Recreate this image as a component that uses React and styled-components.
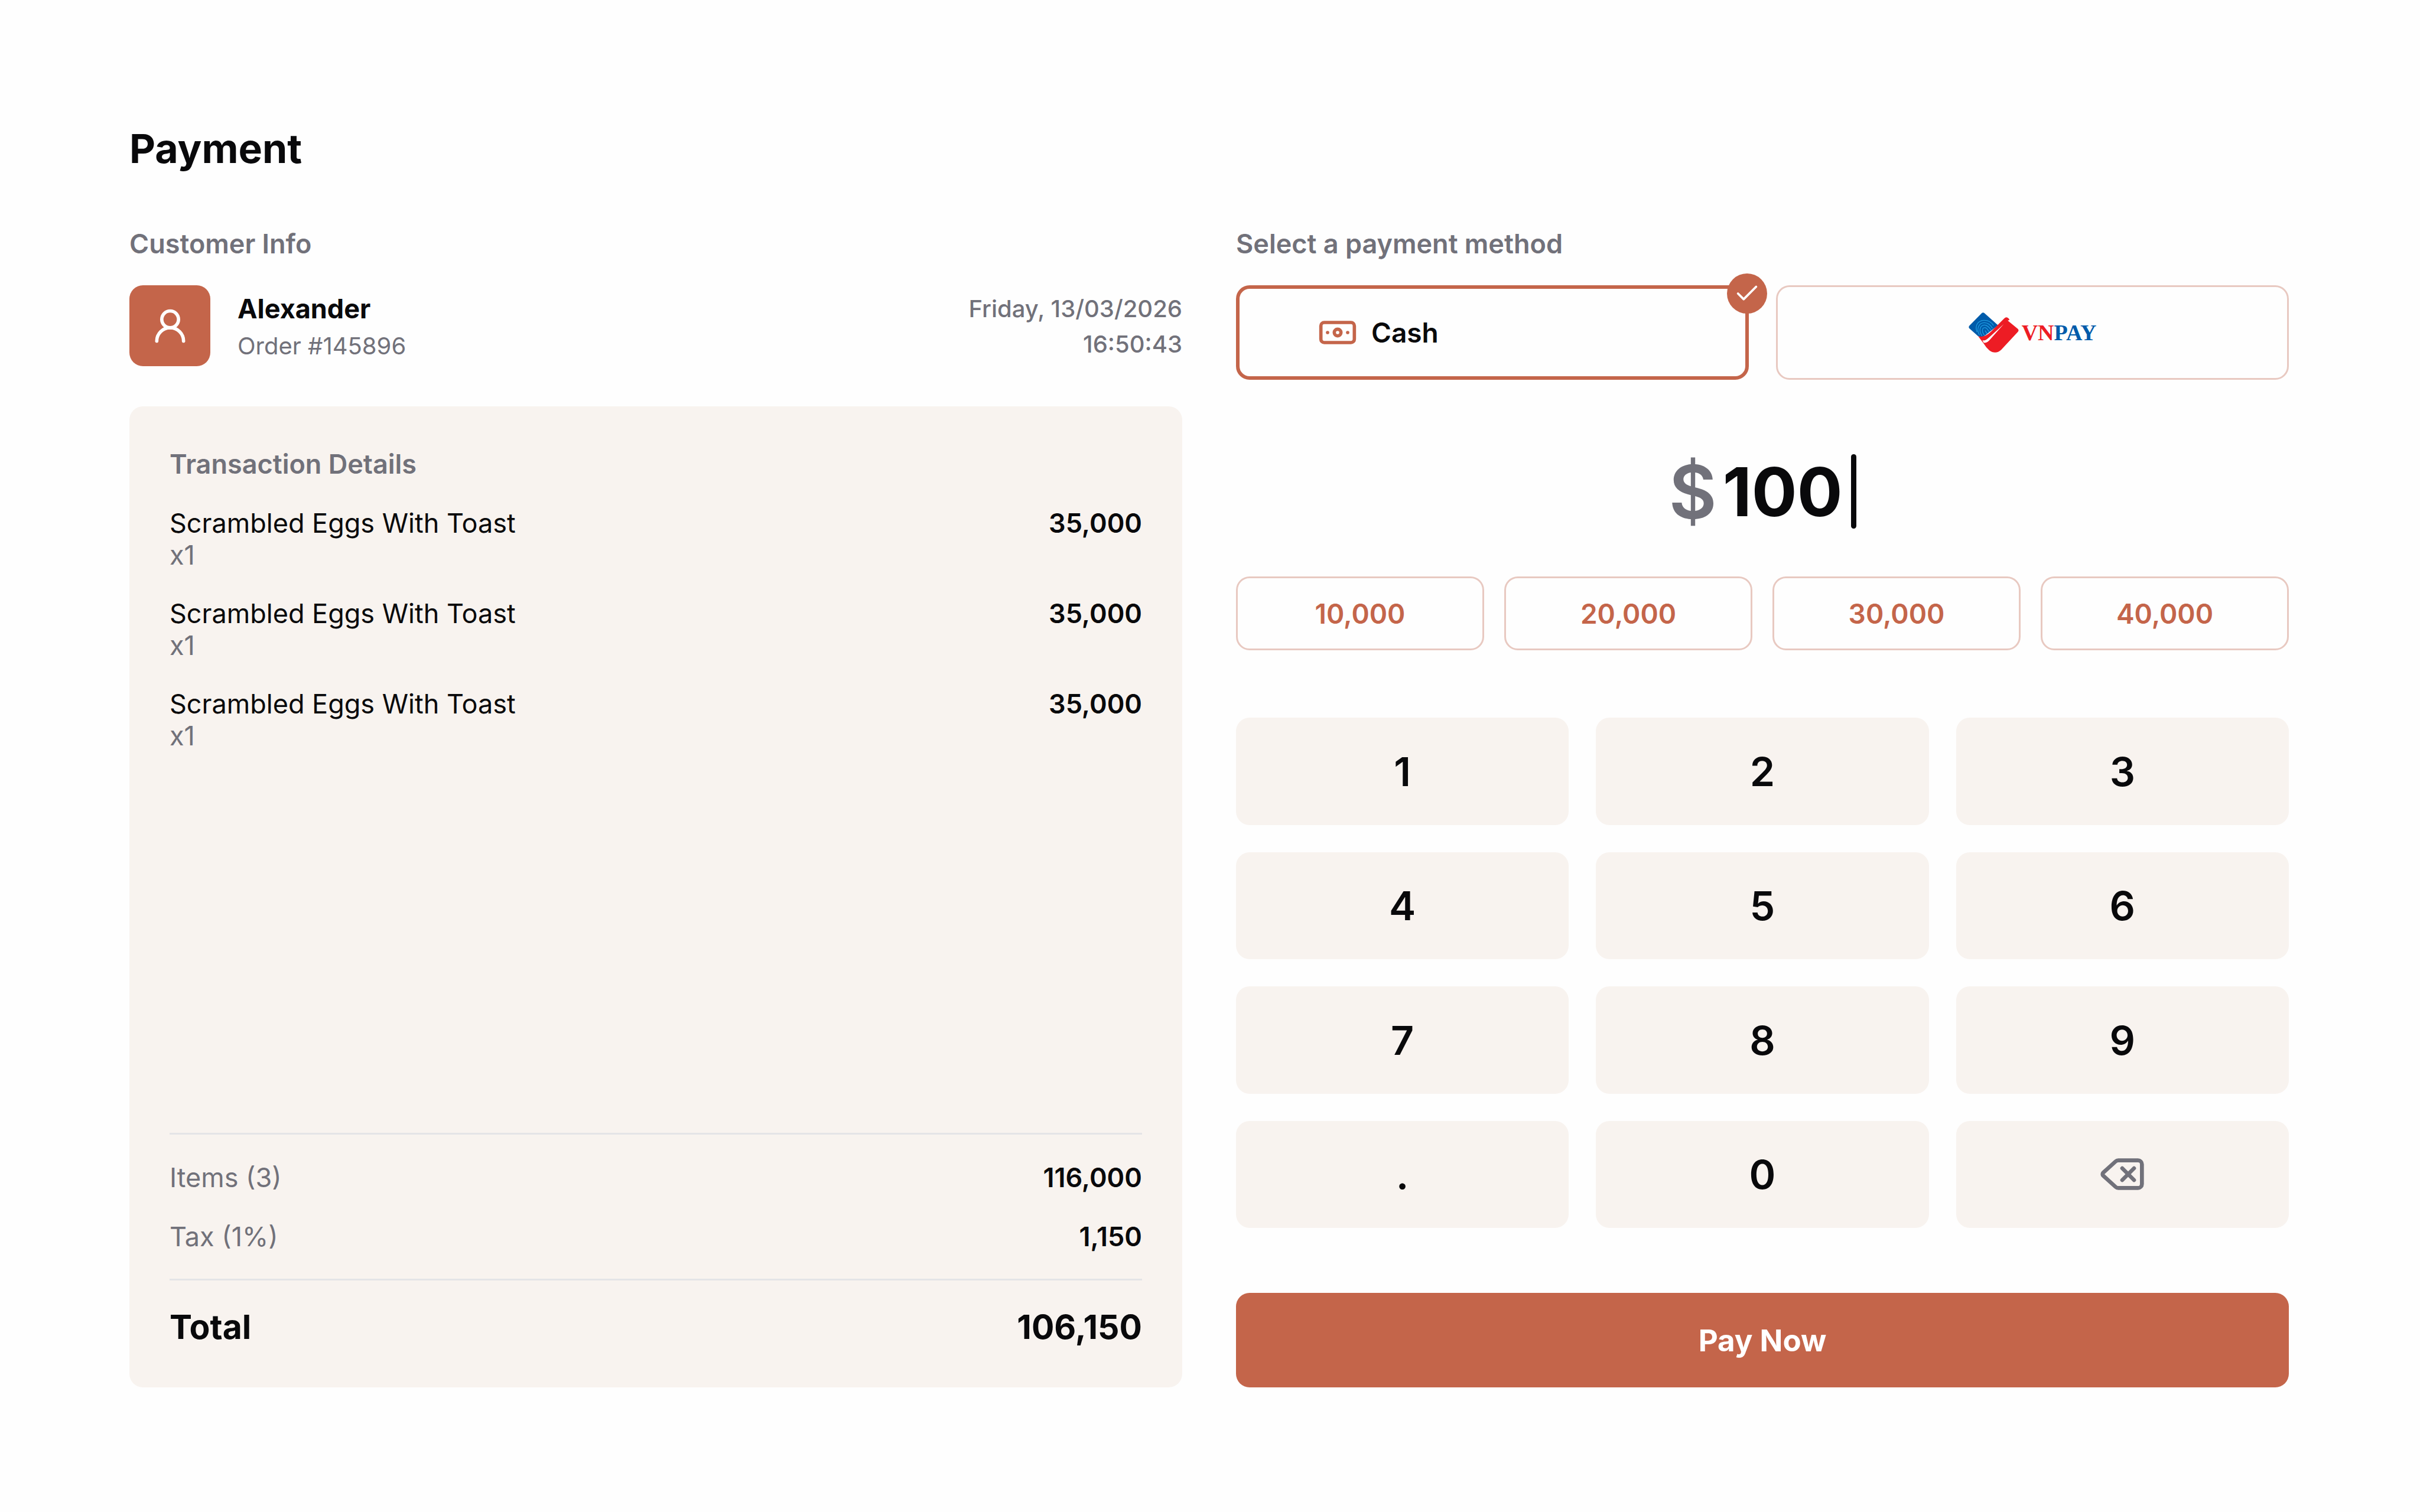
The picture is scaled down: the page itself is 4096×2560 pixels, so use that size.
import { useState } from "react";
import styled, { createGlobalStyle } from "styled-components";
import { Banknote, Check, Delete, UserRound } from "lucide-react";

const GlobalStyle = createGlobalStyle`
  * {
    box-sizing: border-box;
  }

  body {
    margin: 0;
    background: #fefefe;
    color: #09090b;
    font-family: Inter, "Liberation Sans", sans-serif;
  }

  button, input {
    font-family: inherit;
    color: inherit;
  }

  button {
    cursor: pointer;
  }
`;

const Page = styled.main`
  display: flex;
  flex-direction: column;
  min-height: 100vh;
  padding: 210px 222px 211px 219px;
`;

const Title = styled.h1`
  margin: 0 0 94px;
  font-size: 68px;
  line-height: 82px;
  font-weight: 700;
`;

const Columns = styled.div`
  flex: 1;
  display: grid;
  grid-template-columns: 1fr 1fr;
  gap: 91px;
`;

const Column = styled.section`
  display: flex;
  flex-direction: column;
  min-width: 0;
`;

const Heading = styled.h2`
  margin: 0 0 43px;
  color: #71717a;
  font-size: 45px;
  line-height: ${(props) => (props.$inCard ? 60 : 54)}px;
  font-weight: 600;
`;

const Customer = styled.div`
  display: flex;
  align-items: center;
  gap: 46px;
  margin-bottom: 68px;
`;

const Avatar = styled.div`
  display: flex;
  align-items: center;
  justify-content: center;
  width: 137px;
  height: 137px;
  border-radius: 23px;
  background: #c4654a;
  color: #fff;
`;

const Name = styled.div`
  font-size: 45px;
  line-height: 68px;
  font-weight: 700;
`;

const Muted = styled.div`
  color: #71717a;
  font-size: 40px;
  line-height: 57px;
`;

const DateTime = styled.div`
  margin-left: auto;
  padding-top: 3px;
  color: #71717a;
  font-size: 40px;
  line-height: 60px;
  font-weight: 500;
  text-align: right;
`;

const Card = styled.div`
  flex: 1;
  display: flex;
  flex-direction: column;
  padding: 68px;
  border-radius: 23px;
  background: #f8f3ef;
`;

const Items = styled.ul`
  flex: 1;
  display: flex;
  flex-direction: column;
  gap: 45px;
  margin: 0;
  padding: 0;
  list-style: none;
`;

const Row = styled.li`
  display: flex;
  justify-content: space-between;
  font-size: 45px;
  line-height: 54px;
`;

const Quantity = styled.div`
  color: #71717a;
`;

const Price = styled.span`
  font-weight: 600;
`;

const Summary = styled.dl`
  display: flex;
  flex-direction: column;
  gap: 46px;
  margin: 0;
  padding: 46px 0 44px;
  border-top: 3px solid #e4e4e7;
  border-bottom: 3px solid #e4e4e7;
`;

const SummaryRow = styled.div`
  display: flex;
  justify-content: space-between;
  font-size: 45px;
  line-height: 54px;

  dt {
    color: #71717a;
  }

  dd {
    margin: 0;
    font-weight: 600;
  }
`;

const Total = styled.div`
  display: flex;
  justify-content: space-between;
  margin-top: 45px;
  font-size: 57px;
  line-height: 68px;
  font-weight: 700;
`;

const Methods = styled.div`
  display: grid;
  grid-template-columns: 1fr 1fr;
  gap: 46px;
`;

const Method = styled.button`
  position: relative;
  display: flex;
  align-items: center;
  justify-content: ${(props) => (props.$center ? "center" : "flex-start")};
  gap: 23px;
  height: 160px;
  padding: 0 ${(props) => (props.$center ? 0 : 132)}px;
  border: ${(props) => (props.$active ? "6px solid #c4654a" : "3px solid #e8c9c1")};
  border-radius: 23px;
  background: transparent;
  font-size: 46px;
  font-weight: 600;
`;

const Badge = styled.span`
  position: absolute;
  top: -26px;
  right: -37px;
  display: flex;
  align-items: center;
  justify-content: center;
  width: 68px;
  height: 68px;
  border-radius: 50%;
  background: #c4654a;
  color: #fff;
`;

const Logo = styled.span`
  display: flex;
  align-items: center;
  gap: 5px;
  color: #ed1c24;
  font-family: "Liberation Serif", serif;
  font-size: 38px;
  font-weight: 700;

  b {
    color: #005baa;
  }
`;

const Amount = styled.div`
  display: flex;
  align-items: center;
  justify-content: center;
  height: 126px;
  margin: 126px 0 81px;
  font-size: 114px;
  font-weight: 700;
`;

const Currency = styled.label`
  margin-right: 10px;
  color: #71717a;
  font-size: 125px;
  font-weight: 600;
`;

const AmountInput = styled.input`
  field-sizing: content;
  padding: 0;
  border: none;
  outline: none;
  background: transparent;
  caret-color: transparent;
  font-size: 114px;
  font-weight: 700;
`;

const Caret = styled.span`
  width: 9px;
  height: 126px;
  margin-left: 14px;
  border-radius: 5px;
  background: #09090b;
`;

const Presets = styled.div`
  display: grid;
  grid-template-columns: repeat(4, 1fr);
  gap: 34px;
`;

const Preset = styled.button`
  height: 125px;
  border: 3px solid #e8c9c1;
  border-radius: 23px;
  background: transparent;
  color: #c4654a;
  font-size: 46px;
  font-weight: 600;
`;

const Keypad = styled.div`
  flex: 1;
  display: grid;
  grid-template-columns: repeat(3, 1fr);
  grid-auto-rows: 1fr;
  gap: 46px;
  margin: 114px 0 110px;
`;

const Key = styled.button`
  display: flex;
  align-items: center;
  justify-content: center;
  border: none;
  border-radius: 23px;
  background: #f8f3ef;
  font-size: 68px;
  font-weight: 600;

  svg {
    color: #71717a;
  }
`;

const PayButton = styled.button`
  height: 160px;
  border: none;
  border-radius: 23px;
  background: #c4654a;
  color: #fff;
  font-size: 51px;
  font-weight: 700;
`;

const VnpayMark = () => (
  <svg width="85" height="68" viewBox="0 0 254 204" fill="none" aria-hidden="true">
    <path
      d="M66 4q7-7 14 0l69 61-69 54q-14 8-32 2L4 82q-7-7 0-15z"
      fill="#005baa"
    />
    <g stroke="#1f9be0" strokeWidth="4" strokeLinecap="round">
      <path d="M42 98c-12-30 4-56 34-58 22-1 40 10 49 25" />
      <path d="M54 114c-16-30-4-60 24-62 18-1 34 12 42 28" />
      <path d="M67 118c-18-26-10-52 12-54 16-1 26 14 36 26" />
      <path d="M80 116c-16-20-12-38 2-39 10 0 14 12 22 20" />
      <path d="M92 107l-8-14" />
    </g>
    <path
      d="M48 121c22 6 42-2 66-24l66-66q9-10 18-4 7 4 9 11l-9 3 52 43q6 7 0 14l-85 92q-29 26-61 2-15-13-30-37z"
      fill="#ed1c24"
    />
    <path
      d="M178 59l-76 69c-12 11-20 16-32 14l6 12c14 2 24-6 34-18z"
      fill="#fff"
    />
  </svg>
);

const items = [
  { id: 1, name: "Scrambled Eggs With Toast", quantity: 1, price: "35,000" },
  { id: 2, name: "Scrambled Eggs With Toast", quantity: 1, price: "35,000" },
  { id: 3, name: "Scrambled Eggs With Toast", quantity: 1, price: "35,000" },
];

const presets = ["10,000", "20,000", "30,000", "40,000"];

const keys = ["1", "2", "3", "4", "5", "6", "7", "8", "9", ".", "0"];

const App = () => {
  const [method, setMethod] = useState("cash");
  const [amount, setAmount] = useState("100");

  return (
    <>
      <GlobalStyle />
      <Page>
        <Title>Payment</Title>
        <Columns>
          <Column>
            <Heading>Customer Info</Heading>
            <Customer>
              <Avatar>
                <UserRound size={68} />
              </Avatar>
              <div>
                <Name>Alexander</Name>
                <Muted>Order #145896</Muted>
              </div>
              <DateTime>
                <div>Friday, 13/03/2026</div>
                <div>16:50:43</div>
              </DateTime>
            </Customer>
            <Card>
              <Heading $inCard>Transaction Details</Heading>
              <Items>
                {items.map((item) => (
                  <Row key={item.id}>
                    <div>
                      <div>{item.name}</div>
                      <Quantity>x{item.quantity}</Quantity>
                    </div>
                    <Price>{item.price}</Price>
                  </Row>
                ))}
              </Items>
              <Summary>
                <SummaryRow>
                  <dt>Items (3)</dt>
                  <dd>116,000</dd>
                </SummaryRow>
                <SummaryRow>
                  <dt>Tax (1%)</dt>
                  <dd>1,150</dd>
                </SummaryRow>
              </Summary>
              <Total>
                <span>Total</span>
                <span>106,150</span>
              </Total>
            </Card>
          </Column>

          <Column>
            <Heading>Select a payment method</Heading>
            <Methods>
              <Method
                type="button"
                $active={method === "cash"}
                aria-pressed={method === "cash"}
                onClick={() => setMethod("cash")}
              >
                <Banknote size={68} color="#c4654a" />
                Cash
                {method === "cash" && (
                  <Badge>
                    <Check size={46} />
                  </Badge>
                )}
              </Method>
              <Method
                type="button"
                $center
                $active={method === "vnpay"}
                aria-pressed={method === "vnpay"}
                onClick={() => setMethod("vnpay")}
              >
                <Logo>
                  <VnpayMark />
                  <span>
                    VN<b>PAY</b>
                  </span>
                </Logo>
                {method === "vnpay" && (
                  <Badge>
                    <Check size={46} />
                  </Badge>
                )}
              </Method>
            </Methods>
            <Amount>
              <Currency htmlFor="amount">$</Currency>
              <AmountInput
                id="amount"
                type="text"
                inputMode="decimal"
                value={amount}
                onChange={(e) => setAmount(e.target.value)}
              />
              <Caret />
            </Amount>
            <Presets>
              {presets.map((value) => (
                <Preset key={value} type="button" onClick={() => setAmount(value)}>
                  {value}
                </Preset>
              ))}
            </Presets>
            <Keypad>
              {keys.map((key) => (
                <Key key={key} type="button" onClick={() => setAmount(amount + key)}>
                  {key}
                </Key>
              ))}
              <Key
                type="button"
                aria-label="Delete"
                onClick={() => setAmount(amount.slice(0, -1))}
              >
                <Delete size={80} />
              </Key>
            </Keypad>
            <PayButton type="button">Pay Now</PayButton>
          </Column>
        </Columns>
      </Page>
    </>
  );
};

export default App;
